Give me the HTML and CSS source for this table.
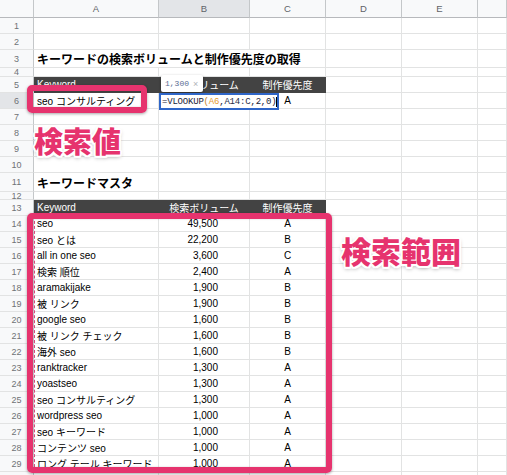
FILE: index.html
```html
<!DOCTYPE html>
<html lang="ja">
<head>
<meta charset="utf-8">
<title>キーワードの検索ボリュームと制作優先度の取得</title>
<link rel="stylesheet" href="styles.css">
</head>
<body>
<div class="sheet">
  <div class="row colhead">
    <div class="corner"></div>
    <div class="ch">A</div>
    <div class="ch sel">B</div>
    <div class="ch">C</div>
    <div class="ch">D</div>
    <div class="ch">E</div>
    <div class="ch"></div>
  </div>

  <div class="row h16"><div class="rn">1</div><div class="c"></div><div class="c"></div><div class="c"></div><div class="c"></div><div class="c"></div><div class="c"></div></div>
  <div class="row h16"><div class="rn">2</div><div class="c"></div><div class="c"></div><div class="c"></div><div class="c"></div><div class="c"></div><div class="c"></div></div>
  <div class="row h18"><div class="rn">3</div><div class="c span3 title">キーワードの検索ボリュームと制作優先度の取得</div><div class="c"></div><div class="c"></div><div class="c"></div></div>
  <div class="row h9"><div class="rn">4</div><div class="c"></div><div class="c"></div><div class="c"></div><div class="c"></div><div class="c"></div><div class="c"></div></div>
  <div class="row h16"><div class="rn">5</div><div class="c hd">Keyword</div><div class="c hd center">検索ボリューム</div><div class="c hd center">制作優先度</div><div class="c"></div><div class="c"></div><div class="c"></div></div>
  <div class="row h16"><div class="rn sel">6</div><div class="c">seo コンサルティング</div><div class="c"></div><div class="c center">A</div><div class="c"></div><div class="c"></div><div class="c"></div></div>
  <div class="row h16"><div class="rn">7</div><div class="c"></div><div class="c"></div><div class="c"></div><div class="c"></div><div class="c"></div><div class="c"></div></div>
  <div class="row h16"><div class="rn">8</div><div class="c"></div><div class="c"></div><div class="c"></div><div class="c"></div><div class="c"></div><div class="c"></div></div>
  <div class="row h16"><div class="rn">9</div><div class="c"></div><div class="c"></div><div class="c"></div><div class="c"></div><div class="c"></div><div class="c"></div></div>
  <div class="row h16"><div class="rn">10</div><div class="c"></div><div class="c"></div><div class="c"></div><div class="c"></div><div class="c"></div><div class="c"></div></div>
  <div class="row h19"><div class="rn">11</div><div class="c title">キーワードマスタ</div><div class="c"></div><div class="c"></div><div class="c"></div><div class="c"></div><div class="c"></div></div>
  <div class="row h8"><div class="rn">12</div><div class="c"></div><div class="c"></div><div class="c"></div><div class="c"></div><div class="c"></div><div class="c"></div></div>
  <div class="row h16"><div class="rn">13</div><div class="c hd">Keyword</div><div class="c hd center">検索ボリューム</div><div class="c hd center">制作優先度</div><div class="c"></div><div class="c"></div><div class="c"></div></div>

  <div class="row h16"><div class="rn">14</div><div class="c">seo</div><div class="c num">49,500</div><div class="c center">A</div><div class="c"></div><div class="c"></div><div class="c"></div></div>
  <div class="row h16"><div class="rn">15</div><div class="c">seo とは</div><div class="c num">22,200</div><div class="c center">B</div><div class="c"></div><div class="c"></div><div class="c"></div></div>
  <div class="row h16"><div class="rn">16</div><div class="c">all in one seo</div><div class="c num">3,600</div><div class="c center">C</div><div class="c"></div><div class="c"></div><div class="c"></div></div>
  <div class="row h16"><div class="rn">17</div><div class="c">検索 順位</div><div class="c num">2,400</div><div class="c center">A</div><div class="c"></div><div class="c"></div><div class="c"></div></div>
  <div class="row h16"><div class="rn">18</div><div class="c">aramakijake</div><div class="c num">1,900</div><div class="c center">B</div><div class="c"></div><div class="c"></div><div class="c"></div></div>
  <div class="row h16"><div class="rn">19</div><div class="c">被 リンク</div><div class="c num">1,900</div><div class="c center">B</div><div class="c"></div><div class="c"></div><div class="c"></div></div>
  <div class="row h16"><div class="rn">20</div><div class="c">google seo</div><div class="c num">1,600</div><div class="c center">B</div><div class="c"></div><div class="c"></div><div class="c"></div></div>
  <div class="row h16"><div class="rn">21</div><div class="c">被 リンク チェック</div><div class="c num">1,600</div><div class="c center">B</div><div class="c"></div><div class="c"></div><div class="c"></div></div>
  <div class="row h16"><div class="rn">22</div><div class="c">海外 seo</div><div class="c num">1,600</div><div class="c center">B</div><div class="c"></div><div class="c"></div><div class="c"></div></div>
  <div class="row h16"><div class="rn">23</div><div class="c">ranktracker</div><div class="c num">1,300</div><div class="c center">A</div><div class="c"></div><div class="c"></div><div class="c"></div></div>
  <div class="row h16"><div class="rn">24</div><div class="c">yoastseo</div><div class="c num">1,300</div><div class="c center">A</div><div class="c"></div><div class="c"></div><div class="c"></div></div>
  <div class="row h16"><div class="rn">25</div><div class="c">seo コンサルティング</div><div class="c num">1,300</div><div class="c center">A</div><div class="c"></div><div class="c"></div><div class="c"></div></div>
  <div class="row h16"><div class="rn">26</div><div class="c">wordpress seo</div><div class="c num">1,000</div><div class="c center">A</div><div class="c"></div><div class="c"></div><div class="c"></div></div>
  <div class="row h16"><div class="rn">27</div><div class="c">seo キーワード</div><div class="c num">1,000</div><div class="c center">A</div><div class="c"></div><div class="c"></div><div class="c"></div></div>
  <div class="row h16"><div class="rn">28</div><div class="c">コンテンツ seo</div><div class="c num">1,000</div><div class="c center">A</div><div class="c"></div><div class="c"></div><div class="c"></div></div>
  <div class="row h16"><div class="rn">29</div><div class="c">ロング テール キーワード</div><div class="c num">1,000</div><div class="c center">A</div><div class="c"></div><div class="c"></div><div class="c"></div></div>
  <div class="row h16"><div class="rn"></div><div class="c"></div><div class="c"></div><div class="c"></div><div class="c"></div><div class="c"></div><div class="c"></div></div>

  <!-- overlays -->
  <div class="tip"><span class="tip-val">1,300</span><span class="tip-x">×</span></div>
  <div class="editor">=VLOOKUP<span class="paren">(</span><span class="ref1">A6</span>,<span class="ref2">A14:C</span>,2,0<span class="caret">)</span></div>
  <div class="range-dots"></div>
  <div class="mark mark-small"></div>
  <div class="mark mark-big"></div>
  <div class="callout callout-value">検索値</div>
  <div class="callout callout-range">検索範囲</div>
</div>
</body>
</html>
```

FILE: styles.css
```css
html, body {
  margin: 0;
  padding: 0;
  background: #ffffff;
}
body {
  width: 507px;
  height: 475px;
  overflow: hidden;
  font-family: "Liberation Sans", Arial, "Noto Sans CJK JP", sans-serif;
  color: #000;
}
.sheet {
  position: relative;
  width: 507px;
}
.row {
  display: grid;
  grid-template-columns: 34px 125px 91px 76px 76px 76px 29px;
  height: 16px;
}
.row.h18 { height: 18px; }
.row.h19 { height: 19px; }
.row.h9 { height: 9px; }
.row.h8 { height: 8px; }
.row.colhead { height: 18px; }

.corner,
.ch {
  background: #f8f9fa;
  border-right: 1px solid #c4c7c9;
  border-bottom: 1px solid #b7b9bc;
  box-sizing: border-box;
}
.ch {
  display: flex;
  align-items: center;
  justify-content: center;
  font-size: 9.5px;
  color: #5f6368;
}
.ch.sel { background: #e3e5e8; }

.rn {
  background: #f8f9fa;
  border-right: 1px solid #c4c7c9;
  border-bottom: 1px solid #e2e3e3;
  box-sizing: border-box;
  display: flex;
  align-items: center;
  justify-content: center;
  font-size: 9px;
  color: #6f7276;
  overflow: hidden;
}
.rn.sel { background: #e3e5e8; }

.c {
  border-right: 1px solid #e2e3e3;
  border-bottom: 1px solid #e2e3e3;
  box-sizing: border-box;
  display: flex;
  align-items: center;
  padding: 0 3px;
  font-size: 10px;
  white-space: nowrap;
  overflow: visible;
}
.span3 { grid-column: span 3; }
.title {
  font-size: 12px;
  font-weight: 700;
}
.center { justify-content: center; }
.num { justify-content: flex-end; padding-right: 31px; }
.hd {
  background: #434343;
  color: #ffffff;
  border-right-color: #434343;
  border-bottom-color: #434343;
}

/* overlays */
.tip {
  position: absolute;
  left: 161px;
  top: 75px;
  width: 42px;
  height: 17px;
  box-sizing: border-box;
  background: #fff;
  border-radius: 2px;
  box-shadow: 0 1px 3px rgba(0, 0, 0, 0.35);
  display: flex;
  align-items: center;
  gap: 4px;
  padding-left: 4px;
  font-family: "Liberation Mono", "DejaVu Sans Mono", monospace;
  font-size: 8px;
}
.tip-val { color: #5a6d93; }
.tip-x { color: #b0b3b8; font-family: "Liberation Sans", Arial, sans-serif; font-size: 9px; }

.editor {
  position: absolute;
  left: 159px;
  top: 93px;
  width: 120px;
  height: 17px;
  box-sizing: border-box;
  background: #fff;
  border: 2px solid #2f66c8;
  display: flex;
  align-items: center;
  padding-left: 1px;
  font-family: "Liberation Mono", "DejaVu Sans Mono", monospace;
  font-size: 9px;
  letter-spacing: -0.2px;
  color: #1a2238;
  white-space: nowrap;
  overflow: hidden;
}
.paren { color: #c8862b; }
.ref1 { color: #e69a2e; }
.ref2 { color: #2b2f4a; }
.caret { border-right: 1px solid #000; }

.range-dots {
  position: absolute;
  left: 34px;
  top: 216px;
  height: 256px;
  border-left: 1px dashed #d84a82;
}

.mark {
  position: absolute;
  box-sizing: border-box;
  border: 6px solid #e6336e;
  border-radius: 5px;
  box-shadow: 0 1px 3px rgba(0, 0, 0, 0.35), inset 0 0 2px rgba(0, 0, 0, 0.2);
}
.mark-small {
  left: 27px;
  top: 85px;
  width: 120px;
  height: 28px;
}
.mark-big {
  left: 27px;
  top: 213px;
  width: 305px;
  height: 260px;
}

.callout {
  position: absolute;
  font-family: "Noto Sans CJK JP", sans-serif;
  font-weight: 900;
  color: #e6336e;
  line-height: 1;
  white-space: nowrap;
  text-shadow:
    2px 0 0 #fff, -2px 0 0 #fff, 0 2px 0 #fff, 0 -2px 0 #fff,
    1.5px 1.5px 0 #fff, -1.5px 1.5px 0 #fff, 1.5px -1.5px 0 #fff, -1.5px -1.5px 0 #fff,
    0 2px 4px rgba(0, 0, 0, 0.45);
}
.callout-value {
  left: 34px;
  top: 126px;
  font-size: 29px;
}
.callout-range {
  left: 341px;
  top: 235px;
  font-size: 30px;
}
```
